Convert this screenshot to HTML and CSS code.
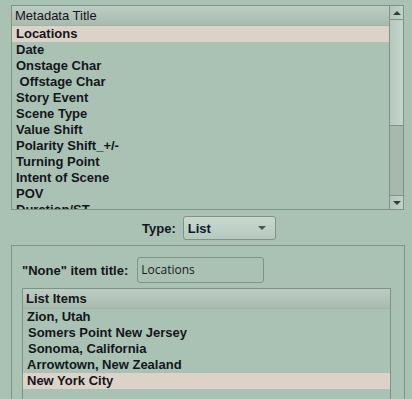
FILE: index.html
```html
<!DOCTYPE html>
<html lang="en">
<head>
  <meta charset="UTF-8">
  <title>Metadata Settings</title>
  <link rel="stylesheet" href="styles.css">
</head>
<body>

<div class="listbox top-list">
  <div class="list">
    <div class="list-head">Metadata Title</div>
    <div class="rows">
      <div class="row selected">Locations</div>
      <div class="row">Date</div>
      <div class="row">Onstage Char</div>
      <div class="row">&nbsp;Offstage Char</div>
      <div class="row">Story Event</div>
      <div class="row">Scene Type</div>
      <div class="row">Value Shift</div>
      <div class="row">Polarity Shift_+/-</div>
      <div class="row">Turning Point</div>
      <div class="row">Intent of Scene</div>
      <div class="row">POV</div>
      <div class="row">Duration/ST</div>
    </div>
  </div>
  <div class="scrollbar">
    <div class="scroll-btn"><span class="arrow-up"></span></div>
    <div class="scroll-thumb"></div>
    <div class="scroll-track"></div>
    <div class="scroll-btn bottom"><span class="arrow-down"></span></div>
  </div>
</div>

<div class="type-row">
  <span class="label">Type:</span>
  <div class="dropdown">
    <span>List</span>
    <span class="arrow-down small"></span>
  </div>
</div>

<div class="group">
  <div class="field-row">
    <span class="label">"None" item title:</span>
    <div class="text-input">Locations</div>
  </div>
  <div class="listbox items-list">
    <div class="list">
      <div class="list-head bold">List Items</div>
      <div class="rows">
        <div class="row">Zion, Utah</div>
        <div class="row indent">Somers Point New Jersey</div>
        <div class="row indent">Sonoma, California</div>
        <div class="row">Arrowtown, New Zealand</div>
        <div class="row selected">New York City</div>
        <div class="row"></div>
      </div>
    </div>
  </div>
</div>

</body>
</html>
```

FILE: styles.css
```css
body {
  margin: 0;
  height: 399px;
  background-color: #a9c2b4;
  font-family: "Liberation Sans", Arial, sans-serif;
  font-size: 13px;
  color: #15151c;
  overflow: hidden;
}

.listbox {
  display: flex;
  border: 1px solid #7d9487;
  background-color: #a9c2b4;
}

.top-list {
  margin: 5px 0 0 11px;
  width: 391px;
  height: 203px;
}

.list {
  flex: 1;
  display: flex;
  flex-direction: column;
  overflow: hidden;
}

.list-head {
  height: 19px;
  line-height: 19px;
  padding-left: 3px;
  background: linear-gradient(#bccdc3, #a9baaf);
  border-bottom: 1px solid #a0b3a7;
}

.list-head.bold {
  font-weight: bold;
}

.rows {
  flex: 1;
  overflow: hidden;
}

.row {
  height: 16px;
  line-height: 16px;
  padding-left: 4px;
  font-weight: bold;
  white-space: nowrap;
}

.row.indent {
  padding-left: 5px;
}

.row.selected {
  background-color: #ddd2c8;
}

.scrollbar {
  width: 13px;
  display: flex;
  flex-direction: column;
  border-left: 1px solid #7d9487;
}

.scroll-btn {
  height: 13px;
  display: flex;
  align-items: center;
  justify-content: center;
  background: linear-gradient(90deg, #b3c6bb, #c2d3c9);
  border-bottom: 1px solid #7d9487;
}

.scroll-btn.bottom {
  border-bottom: none;
  border-top: 1px solid #7d9487;
}

.scroll-thumb {
  height: 105px;
  background: linear-gradient(90deg, #b6c9be, #c5d6cc);
  border-bottom: 1px solid #7d9487;
}

.scroll-track {
  flex: 1;
  background-color: #a7b8ad;
}

.arrow-up {
  width: 0;
  height: 0;
  border-left: 4px solid transparent;
  border-right: 4px solid transparent;
  border-bottom: 4px solid #33403a;
}

.arrow-down {
  width: 0;
  height: 0;
  border-left: 4px solid transparent;
  border-right: 4px solid transparent;
  border-top: 4px solid #33403a;
}

.arrow-down.small {
  border-top: 4px solid #4a5650;
}

.type-row {
  display: flex;
  align-items: center;
  gap: 7px;
  margin-top: 6px;
  padding-left: 142px;
}

.label {
  font-weight: bold;
}

.dropdown {
  width: 78px;
  height: 22px;
  padding: 0 9px 0 4px;
  display: flex;
  align-items: center;
  justify-content: space-between;
  border: 1px solid #7d9487;
  border-radius: 3px;
  background: linear-gradient(#c8d8cf, #b6c9be);
  font-weight: bold;
  color: #0f1830;
}

.group {
  margin: 5px 0 0 11px;
  width: 382px;
  height: 160px;
  padding: 11px 0 0 10px;
  border: 1px solid #7d9487;
}

.field-row {
  display: flex;
  align-items: center;
  gap: 9px;
}

.text-input {
  width: 122px;
  height: 24px;
  line-height: 24px;
  padding-left: 3px;
  border: 1px solid #7d9487;
  border-radius: 3px;
  font-family: "Open Sans", sans-serif;
  font-size: 12px;
  color: #1a1a22;
}

.items-list {
  margin-top: 5px;
  width: 367px;
  height: 120px;
}
```
